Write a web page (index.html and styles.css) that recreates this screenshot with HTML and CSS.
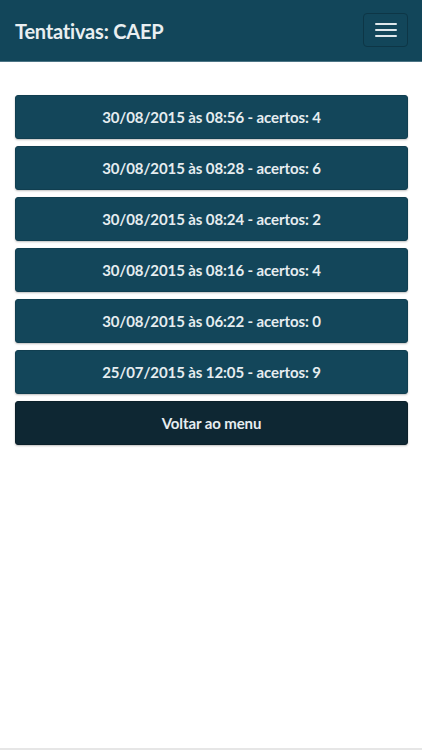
FILE: index.html
```html
<!DOCTYPE html>
<html lang="pt">
<head>
<meta charset="utf-8">
<title>Tentativas: CAEP</title>
<link rel="stylesheet" href="styles.css">
</head>
<body>
<header class="header">
  <h1 class="title">Tentativas: CAEP</h1>
  <button class="menu-btn" aria-label="Menu">
    <span class="bar"></span><span class="bar"></span><span class="bar"></span>
  </button>
</header>
<main class="content">
  <a class="btn" href="#">30/08/2015 às 08:56 - acertos: 4</a>
  <a class="btn" href="#">30/08/2015 às 08:28 - acertos: 6</a>
  <a class="btn" href="#">30/08/2015 às 08:24 - acertos: 2</a>
  <a class="btn" href="#">30/08/2015 às 08:16 - acertos: 4</a>
  <a class="btn" href="#">30/08/2015 às 06:22 - acertos: 0</a>
  <a class="btn" href="#">25/07/2015 às 12:05 - acertos: 9</a>
  <a class="btn btn-dark" href="#">Voltar ao menu</a>
</main>
</body>
</html>
```
FILE: styles.css
```css
* { box-sizing: border-box; }
html, body { margin: 0; padding: 0; }
body {
  font-family: Lato, "Open Sans", sans-serif;
  background: #ffffff;
  height: 750px;
  border-bottom: 2px solid #e6e6e6;
}
.header {
  height: 62px;
  background: #12465a;
  border-bottom: 1px solid #4c7485;
  display: flex;
  align-items: center;
  justify-content: space-between;
  padding: 0 14px 0 15px;
}
.title {
  margin: 0;
  font-size: 20px;
  font-weight: 700;
  color: #e9eff1;
  letter-spacing: -0.2px;
}
.menu-btn {
  width: 45px;
  height: 34px;
  margin-top: -1px;
  background: #12465a;
  border: 1px solid #0d3646;
  border-radius: 4px;
  display: flex;
  flex-direction: column;
  align-items: center;
  justify-content: center;
  gap: 4px;
  padding: 0;
}
.bar {
  display: block;
  width: 22px;
  height: 2px;
  background: #dfe8ec;
  border-radius: 1px;
}
.content {
  padding: 33px 14px 0 15px;
  display: flex;
  flex-direction: column;
  gap: 7px;
}
.btn {
  display: flex;
  align-items: center;
  justify-content: center;
  height: 44px;
  background: #13465a;
  border: 1px solid #103e50;
  border-radius: 3px;
  color: #e6edf0;
  font-size: 15px;
  font-weight: 700;
  text-decoration: none;
  letter-spacing: -0.1px;
  box-shadow: 0 1px 2px rgba(0,0,0,0.25);
}
.btn-dark {
  background: #0e2733;
  border-color: #0b202a;
}
```
